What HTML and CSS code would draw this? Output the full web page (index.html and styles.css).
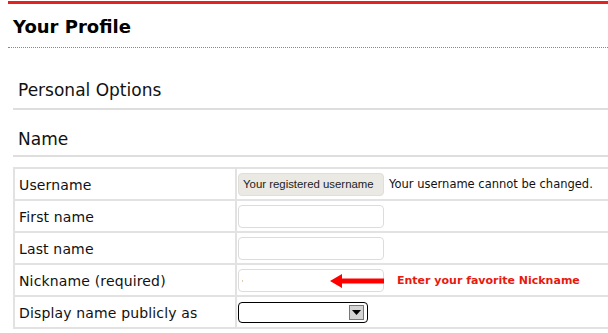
FILE: index.html
```html
<!DOCTYPE html>
<html>
<head>
<meta charset="utf-8">
<link rel="stylesheet" href="styles.css">
</head>
<body>
<div class="page">
  <div class="topbar"></div>
  <h1 class="title">Your Profile</h1>
  <div class="content">
    <h2 class="section">Personal Options</h2>
    <h2 class="section second">Name</h2>
    <table class="form">
      <tr>
        <td class="label">Username</td>
        <td class="field"><span class="readonly">Your registered username</span><span class="desc">Your username cannot be changed.</span></td>
      </tr>
      <tr>
        <td class="label">First name</td>
        <td class="field"><span class="input"></span></td>
      </tr>
      <tr>
        <td class="label">Last name</td>
        <td class="field"><span class="input"></span></td>
      </tr>
      <tr>
        <td class="label">Nickname (required)</td>
        <td class="field"><span class="input nick"><span class="caret"></span><svg class="arrow" width="54" height="14" viewBox="0 0 54 14"><polygon points="0,7 12,0 12,4.5 54,4.5 54,9.5 12,9.5 12,14" fill="#ff0000"/></svg></span><span class="hint">Enter your favorite Nickname</span></td>
      </tr>
      <tr>
        <td class="label">Display name publicly as</td>
        <td class="field"><span class="select"><span class="btn"><svg width="9" height="5" viewBox="0 0 9 5"><polygon points="0,0 9,0 4.5,5" fill="#000"/></svg></span></span></td>
      </tr>
    </table>
  </div>
</div>
</body>
</html>
```
FILE: styles.css
```css
html, body { margin: 0; padding: 0; background: #fff; }
body { font-family: "DejaVu Sans", Verdana, sans-serif; color: #000; overflow: hidden; }
.page { margin-left: 8px; padding-top: 1px; }
.topbar { height: 3px; background: #e52222; }
.title {
  margin: 0;
  padding: 12px 0 0 5px;
  height: 31px;
  font-size: 18px;
  font-weight: bold;
  line-height: 22px;
  border-bottom: 1px dotted #888;
}
.content { padding: 25px 0 0 5px; }
.section {
  margin: 0;
  font-weight: normal;
  font-size: 17px;
  line-height: 22px;
  padding: 6px 0 7px 5px;
  border-bottom: 2px solid #dedede;
  color: #111;
}
.section.second { padding-top: 18px; padding-bottom: 5px; }
.form {
  margin-top: 10px;
  border-collapse: collapse;
  width: 620px;
  font-size: 14px;
}
.form td { border: 2px solid #e2e2e2; height: 28px; padding: 0; }
.label { width: 216px; padding-left: 4px !important; color: #111; padding-top: 2px !important; letter-spacing: 0.15px; }
.field { padding-left: 1px !important; white-space: nowrap; }
.readonly {
  display: inline-block;
  vertical-align: middle;
  width: 146px;
  height: 23px;
  line-height: 21px;
  padding-left: 4px;
  box-sizing: border-box;
  background: #ebe9e3;
  border: 1px solid #e0ded8;
  border-radius: 4px;
  font-family: "Liberation Sans", Arial, sans-serif;
  font-size: 11.4px;
  color: #222;
}
.desc { font-size: 11.5px; margin-left: 5px; vertical-align: middle; color: #111; }
.input {
  display: inline-block;
  vertical-align: middle;
  position: relative;
  width: 146px;
  height: 23px;
  box-sizing: border-box;
  border: 1px solid #dcdcdc;
  border-radius: 4px;
  background: #fff;
}
.caret { position: absolute; left: 3px; top: 10px; width: 1px; height: 2px; background: #f0c8a0; }
.arrow { position: absolute; left: 91px; top: 4px; }
.hint { font-size: 11px; font-weight: bold; color: #e8190f; margin-left: 13px; vertical-align: middle; }
.select {
  display: inline-block;
  vertical-align: middle;
  width: 130px;
  height: 21px;
  box-sizing: border-box;
  border: 1px solid #000;
  border-radius: 4px;
  position: relative;
}
.btn {
  position: absolute;
  right: 3px;
  top: 2px;
  width: 15px;
  height: 15px;
  box-sizing: border-box;
  border: 1px solid #777;
  background: #d4d4d4;
  display: flex;
  align-items: center;
  justify-content: center;
}
```
